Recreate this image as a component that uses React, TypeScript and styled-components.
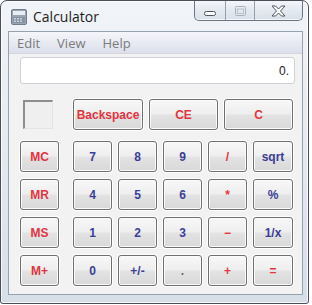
import React from "react";
import styled, { createGlobalStyle } from "styled-components";

const GlobalStyle = createGlobalStyle`
  html, body { margin: 0; padding: 0; background: #ffffff; }
  #root { width: 312px; height: 305px; }
  * { box-sizing: border-box; }
`;

const Window = styled.div`
  width: 309px;
  height: 304px;
  border: 1px solid #4a4f57;
  border-radius: 7px 7px 3px 3px;
  background: linear-gradient(180deg, #f1f4f8 0%, #e6ebf1 45%, #d6dee7 100%);
  box-shadow: inset 0 0 0 1px rgba(255, 255, 255, 0.8);
  display: flex;
  flex-direction: column;
  padding: 0 5px 8px 7px;
  overflow: hidden;
`;

const TitleBar = styled.div`
  height: 30px;
  display: flex;
  align-items: flex-start;
  flex-shrink: 0;
`;

const AppIcon = styled.svg`
  margin: 8px 0 0 3px;
  flex-shrink: 0;
`;

const Title = styled.div`
  margin-left: 6px;
  font-family: "Open Sans", "Noto Sans", sans-serif;
  font-size: 14px;
  line-height: 31px;
  color: #1d1d1d;
`;

const CaptionGroup = styled.div`
  margin-left: auto;
  display: flex;
  height: 20px;
  border: 1px solid #6b7585;
  border-top: none;
  border-radius: 0 0 5px 5px;
  overflow: hidden;
  background: linear-gradient(180deg, #f3f6fa 0%, #e4e9f0 50%, #d9e0e8 100%);
  box-shadow: inset 0 -1px 0 rgba(255, 255, 255, 0.7);
`;

const CaptionButton = styled.div<{ $w: number; $first?: boolean }>`
  width: ${(p) => p.$w}px;
  height: 100%;
  display: flex;
  align-items: center;
  justify-content: center;
  border-left: ${(p) => (p.$first ? "none" : "1px solid #97a1ae")};
`;

const Client = styled.div`
  flex: 1;
  border: 1px solid #97a2af;
  background: #f2f2f2;
  display: flex;
  flex-direction: column;
`;

const MenuBar = styled.div`
  height: 22px;
  display: flex;
  align-items: center;
  gap: 17px;
  padding-left: 8px;
  background: linear-gradient(180deg, #f5f6fb 0%, #e8eaf3 50%, #dcdfeb 100%);
  border-bottom: 1px solid #d3d6e1;
  flex-shrink: 0;
`;

const MenuItem = styled.span`
  font-family: "Open Sans", "Noto Sans", sans-serif;
  font-size: 13px;
  color: #7b7b7b;
`;

const Body = styled.div`
  padding: 3px 0 0 11px;
  display: flex;
  flex-direction: column;
`;

const Display = styled.div`
  width: 275px;
  height: 27px;
  background: #ffffff;
  border: 1px solid #cdd2d9;
  border-radius: 3px;
  text-align: right;
  padding-right: 5px;
  font-family: "Liberation Sans", Arial, sans-serif;
  font-size: 12px;
  line-height: 26px;
  color: #222;
`;

const TopRow = styled.div`
  margin-top: 15px;
  display: flex;
  gap: 14px;
  height: 31px;
`;

const MemoryCell = styled.div`
  width: 39px;
  display: flex;
  align-items: center;
  padding-left: 3px;
`;

const MemoryBox = styled.div`
  width: 30px;
  height: 29px;
  border-top: 2px solid #8e8e8e;
  border-left: 2px solid #8e8e8e;
  border-right: 1px solid #e4e4e4;
  border-bottom: 1px solid #e4e4e4;
  background: #efefef;
`;

const WideKeys = styled.div`
  display: flex;
  gap: 6px;
`;

const Keypad = styled.div`
  margin-top: 11px;
  display: flex;
  gap: 14px;
`;

const MemoryColumn = styled.div`
  display: grid;
  grid-template-columns: 39px;
  grid-auto-rows: 31px;
  row-gap: 7px;
`;

const KeyGrid = styled.div`
  display: grid;
  grid-template-columns: repeat(4, 39px) 40px;
  grid-auto-rows: 31px;
  column-gap: 6px;
  row-gap: 7px;
`;

type Tone = "red" | "blue" | "grey";

const toneColor: Record<Tone, string> = {
  red: "#e4343f",
  blue: "#3a3e97",
  grey: "#6a6a6a",
};

const Key = styled.button<{ $tone: Tone; $w?: number }>`
  width: ${(p) => (p.$w ? `${p.$w}px` : "100%")};
  height: 31px;
  padding: 0;
  margin: 0;
  border: 1px solid #6f6f6f;
  border-radius: 3px;
  background: linear-gradient(180deg, #f7f7f7 0%, #efefef 46%, #e2e2e2 54%, #d9d9d9 100%);
  box-shadow: inset 0 0 0 1px #fbfbfb, 0 0 0 1px rgba(255, 255, 255, 0.9);
  font-family: "Liberation Sans", Arial, sans-serif;
  font-weight: 700;
  font-size: 12px;
  color: ${(p) => toneColor[p.$tone]};
  cursor: default;
`;

const memoryKeys = ["MC", "MR", "MS", "M+"];

const gridKeys: { label: string; tone: Tone }[] = [
  { label: "7", tone: "blue" },
  { label: "8", tone: "blue" },
  { label: "9", tone: "blue" },
  { label: "/", tone: "red" },
  { label: "sqrt", tone: "blue" },
  { label: "4", tone: "blue" },
  { label: "5", tone: "blue" },
  { label: "6", tone: "blue" },
  { label: "*", tone: "red" },
  { label: "%", tone: "blue" },
  { label: "1", tone: "blue" },
  { label: "2", tone: "blue" },
  { label: "3", tone: "blue" },
  { label: "−", tone: "red" },
  { label: "1/x", tone: "blue" },
  { label: "0", tone: "blue" },
  { label: "+/-", tone: "blue" },
  { label: ".", tone: "grey" },
  { label: "+", tone: "red" },
  { label: "=", tone: "red" },
];

export default function App() {
  return (
    <>
      <GlobalStyle />
      <Window>
        <TitleBar>
          <AppIcon width="16" height="16" viewBox="0 0 16 16">
            <rect x="0.5" y="0.5" width="15" height="15" rx="1.5" fill="#9aa5b3" stroke="#717d8c" />
            <rect x="2" y="2" width="12" height="4" fill="#e9eef4" />
            <rect x="2" y="8" width="12" height="6" fill="#8793a2" />
            <rect x="3" y="9" width="2" height="1.5" fill="#c9d1da" />
            <rect x="6" y="9" width="2" height="1.5" fill="#c9d1da" />
            <rect x="9" y="9" width="2" height="1.5" fill="#c9d1da" />
            <rect x="3" y="11.5" width="2" height="1.5" fill="#c9d1da" />
            <rect x="6" y="11.5" width="2" height="1.5" fill="#c9d1da" />
            <rect x="9" y="11.5" width="2" height="1.5" fill="#c9d1da" />
          </AppIcon>
          <Title>Calculator</Title>
          <CaptionGroup>
            <CaptionButton $w={30} $first>
              <svg width="12" height="7" viewBox="0 0 12 7" style={{ marginTop: 5 }}>
                <rect x="0.5" y="1.5" width="11" height="4" rx="1.8" fill="#ffffff" stroke="#4f5660" />
              </svg>
            </CaptionButton>
            <CaptionButton $w={29}>
              <svg width="11" height="10" viewBox="0 0 11 10">
                <rect x="0.5" y="0.5" width="10" height="9" rx="1" fill="none" stroke="#a8b0bb" />
                <rect x="2.5" y="3" width="6" height="4.5" fill="none" stroke="#b9c0c9" />
              </svg>
            </CaptionButton>
            <CaptionButton $w={48}>
              <svg width="15" height="12" viewBox="0 0 15 12">
                <path
                  d="M1 1 H4.5 L7.5 4 L10.5 1 H14 L9.5 6 L14 11 H10.5 L7.5 8 L4.5 11 H1 L5.5 6 Z"
                  fill="#ffffff"
                  stroke="#4f5660"
                  strokeWidth="1"
                  strokeLinejoin="round"
                />
              </svg>
            </CaptionButton>
          </CaptionGroup>
        </TitleBar>
        <Client>
          <MenuBar>
            <MenuItem>Edit</MenuItem>
            <MenuItem>View</MenuItem>
            <MenuItem>Help</MenuItem>
          </MenuBar>
          <Body>
            <Display>0.</Display>
            <TopRow>
              <MemoryCell>
                <MemoryBox />
              </MemoryCell>
              <WideKeys>
                <Key $tone="red" $w={70}>Backspace</Key>
                <Key $tone="red" $w={69}>CE</Key>
                <Key $tone="red" $w={69}>C</Key>
              </WideKeys>
            </TopRow>
            <Keypad>
              <MemoryColumn>
                {memoryKeys.map((k) => (
                  <Key key={k} $tone="red">{k}</Key>
                ))}
              </MemoryColumn>
              <KeyGrid>
                {gridKeys.map((k) => (
                  <Key key={k.label} $tone={k.tone}>{k.label}</Key>
                ))}
              </KeyGrid>
            </Keypad>
          </Body>
        </Client>
      </Window>
    </>
  );
}
